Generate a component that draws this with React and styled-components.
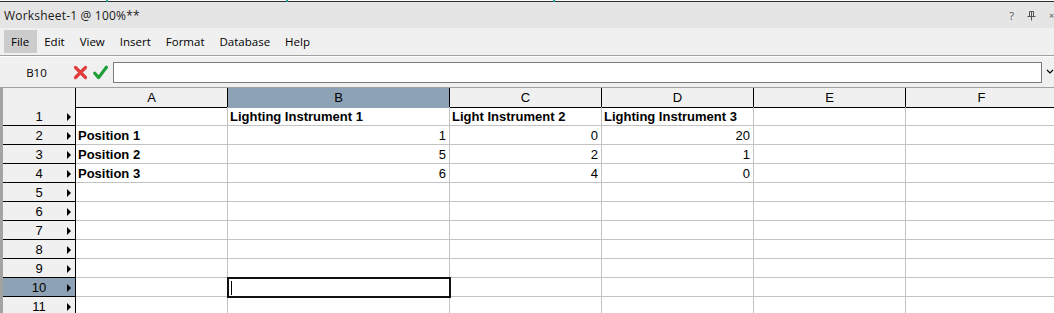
import React from 'react'
import styled, { createGlobalStyle } from 'styled-components'

const GlobalStyle = createGlobalStyle`
  html, body {
    margin: 0;
    padding: 0;
    background: #f0f0f0;
    overflow: hidden;
  }
`

const Window = styled.div`
  width: 1054px;
  height: 313px;
  display: flex;
  flex-direction: column;
  overflow: hidden;
  background: #f0f0f0;
  font-family: "Open Sans", "Noto Sans", sans-serif;
  color: #000;
`

const TopStrip = styled.div`
  height: 2px;
  flex-shrink: 0;
  background: #fafafa;
  border-bottom: 1px solid #303030;
  box-sizing: border-box;
  display: flex;
`

const TealMark = styled.span`
  width: 2px;
  height: 2px;
  background: #1f9a8c;
  margin-left: ${p => p.$at}px;
`

const TitleBar = styled.div`
  height: 26px;
  flex-shrink: 0;
  background: #e5e5e5;
  display: flex;
  align-items: center;
  justify-content: space-between;
  padding: 1px 0 0 4px;
  box-sizing: border-box;
`

const Title = styled.span`
  font-size: 12px;
  letter-spacing: 0.2px;
  color: #1a1a1a;
`

const TitleControls = styled.div`
  display: flex;
  align-items: center;
  gap: 13px;
  color: #555;
  font-size: 11px;
`

const CloseMark = styled.span`
  font-size: 9px;
  width: 5px;
  overflow: hidden;
`

const MenuBar = styled.div`
  flex-shrink: 0;
  display: flex;
  align-items: center;
  padding-left: 3.5px;
  border-bottom: 1px solid #a0a0a0;
  box-sizing: border-box;
  height: 28px;
`

const MenuItem = styled.div`
  height: 23px;
  display: flex;
  align-items: center;
  padding: 0 7.5px;
  font-size: 11.5px;
  background: ${p => (p.$active ? '#cccccc' : 'transparent')};
`

const FormulaBar = styled.div`
  height: 32px;
  flex-shrink: 0;
  display: flex;
  align-items: center;
  box-sizing: border-box;
  border-top: 1px solid #fdfdfd;
  border-bottom: 1px solid #a0a0a0;
`

const CellRef = styled.div`
  width: 73px;
  text-align: center;
  font-size: 11.5px;
`

const ActionIcons = styled.div`
  display: flex;
  align-items: center;
  gap: 5px;
  width: 40px;
`

const FormulaInput = styled.div`
  width: 931px;
  height: 21px;
  box-sizing: border-box;
  background: #fff;
  border: 1px solid #7a7a7a;
`

const Chevron = styled.div`
  margin-left: 4px;
  display: flex;
  align-items: center;
`

const Sheet = styled.div`
  flex: 1;
  overflow: hidden;
  border-left: 3px solid #a3a3a3;
  background: #fff;
`

const Grid = styled.div`
  display: grid;
  grid-template-columns: 73px 152px 222px 152px 152px 152px 152px;
  grid-auto-rows: 19px;
  width: 1055px;
  font-family: "Liberation Sans", Arial, sans-serif;
  font-size: 13px;
`

const ColHeader = styled.div`
  height: 20px;
  box-sizing: border-box;
  background: ${p => (p.$selected ? '#8da2b5' : '#f0f0f0')};
  border-right: 1px solid #000;
  border-bottom: 1px solid ${p => (p.$selected ? '#8da2b5' : '#000')};
  display: flex;
  align-items: center;
  justify-content: center;
`

const RowHeader = styled.div`
  box-sizing: border-box;
  background: ${p => (p.$selected ? '#8da2b5' : '#f0f0f0')};
  border-right: 1px solid #000;
  border-bottom: 1px solid #000;
  display: flex;
  align-items: center;
  padding-left: 12px;
  padding-top: 1px;
`

const RowNumber = styled.span`
  flex: 1;
  text-align: center;
`

const RowArrow = styled.span`
  width: 0;
  height: 0;
  border-top: 4px solid transparent;
  border-bottom: 4px solid transparent;
  border-left: 4px solid #000;
  margin-right: 4px;
  margin-left: 4px;
`

const Cell = styled.div`
  position: relative;
  box-sizing: border-box;
  border-right: 1px solid #c3c3c3;
  border-bottom: 1px solid #c3c3c3;
  display: flex;
  align-items: center;
  justify-content: ${p => (p.$right ? 'flex-end' : 'flex-start')};
  padding: 1px 3px 0 2px;
  font-weight: ${p => (p.$bold ? 700 : 400)};
  white-space: nowrap;
  overflow: hidden;
  outline: ${p => (p.$active ? '2px solid #111' : 'none')};
  outline-offset: -1px;
  z-index: ${p => (p.$active ? 1 : 0)};
`

const Caret = styled.span`
  width: 1px;
  height: 14px;
  background: #000;
  margin-left: 1px;
`

function CrossIcon() {
  return (
    <svg width="15" height="15" viewBox="0 0 15 15">
      <path d="M2.5 2.5 L12.5 12.5 M12.5 2.5 L2.5 12.5" stroke="#e23b3b" strokeWidth="3.2" strokeLinecap="round" />
    </svg>
  )
}

function CheckIcon() {
  return (
    <svg width="15" height="15" viewBox="0 0 15 15">
      <path d="M1.8 8.2 L5.6 12.6 L13.4 2.2" stroke="#1f9e3a" strokeWidth="3.2" fill="none" strokeLinecap="round" strokeLinejoin="round" />
    </svg>
  )
}

function PinIcon() {
  return (
    <svg width="9" height="10" viewBox="0 0 9 10">
      <path d="M2.5 0.5 H6.5 V5.5 M2.5 0.5 V5.5 M0.5 5.5 H8.5 M4.5 5.5 V9.5 M4.5 0.5 V5.5" stroke="#555" strokeWidth="1" fill="none" />
    </svg>
  )
}

const columns = ['A', 'B', 'C', 'D', 'E', 'F']

const data = [
  ['', 'Lighting Instrument 1', 'Light Instrument 2', 'Lighting Instrument 3', '', ''],
  ['Position 1', 1, 0, 20, '', ''],
  ['Position 2', 5, 2, 1, '', ''],
  ['Position 3', 6, 4, 0, '', ''],
]

const menus = ['File', 'Edit', 'View', 'Insert', 'Format', 'Database', 'Help']

export default function App() {
  const rows = Array.from({ length: 11 }, (_, i) => data[i] || ['', '', '', '', '', ''])

  return (
    <Window>
      <GlobalStyle />
      <TopStrip>
        <TealMark $at={106} />
        <TealMark $at={178} />
        <TealMark $at={265} />
      </TopStrip>
      <TitleBar>
        <Title>Worksheet-1 @ 100%**</Title>
        <TitleControls>
          <span>?</span>
          <PinIcon />
          <CloseMark>×</CloseMark>
        </TitleControls>
      </TitleBar>
      <MenuBar>
        {menus.map((m, i) => (
          <MenuItem key={m} $active={i === 0}>{m}</MenuItem>
        ))}
      </MenuBar>
      <FormulaBar>
        <CellRef>B10</CellRef>
        <ActionIcons>
          <CrossIcon />
          <CheckIcon />
        </ActionIcons>
        <FormulaInput />
        <Chevron>
          <svg width="8" height="8" viewBox="0 0 8 8">
            <path d="M1 2 L4 5 L7 2" stroke="#000" strokeWidth="1.2" fill="none" />
          </svg>
        </Chevron>
      </FormulaBar>
      <Sheet>
        <Grid>
          <ColHeader />
          {columns.map(c => (
            <ColHeader key={c} $selected={c === 'B'}>{c}</ColHeader>
          ))}
          {rows.map((row, r) => (
            <React.Fragment key={r}>
              <RowHeader $selected={r === 9}>
                <RowNumber>{r + 1}</RowNumber>
                <RowArrow />
              </RowHeader>
              {row.map((v, c) => {
                const active = r === 9 && c === 1
                return (
                  <Cell
                    key={c}
                    $bold={r === 0 || c === 0}
                    $right={typeof v === 'number'}
                    $active={active}
                  >
                    {active ? <Caret /> : v}
                  </Cell>
                )
              })}
            </React.Fragment>
          ))}
        </Grid>
      </Sheet>
    </Window>
  )
}
